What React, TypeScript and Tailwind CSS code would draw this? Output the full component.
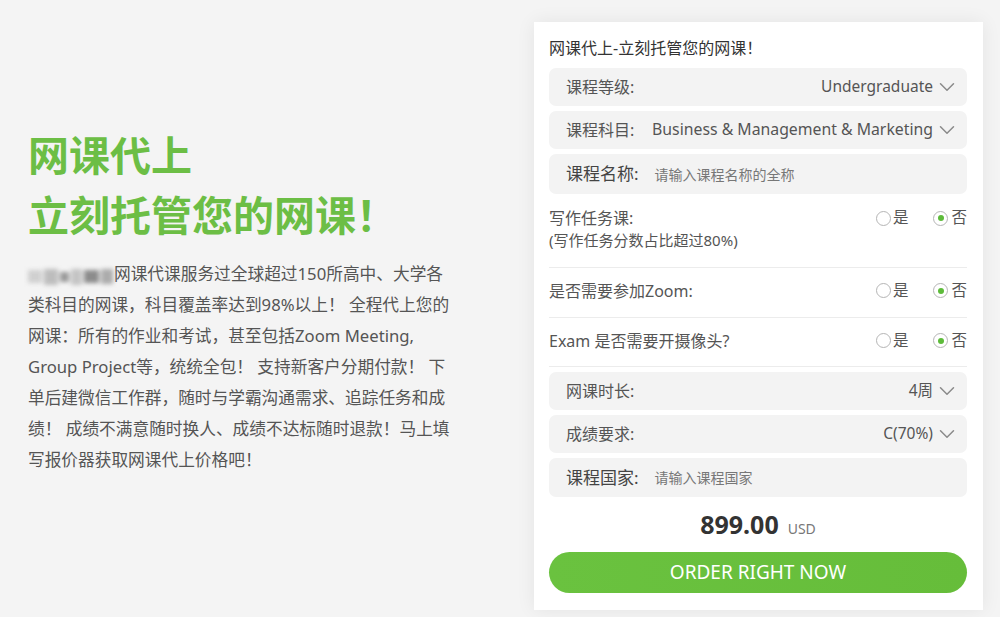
import React from 'react';

const font = "font-['Noto_Sans','Noto_Sans_CJK_SC',sans-serif]";

const Chevron = () => (
  <svg width="16" height="10" viewBox="0 0 16 10" fill="none" className="ml-[6px]">
    <path d="M1.5 1.8 8 8.2l6.5-6.4" stroke="#8a8a8a" strokeWidth="1.5" strokeLinecap="round" strokeLinejoin="round" />
  </svg>
);

const SelectBox = ({ label, value, h = 'h-[38px]' }: { label: string; value: string; h?: string }) => (
  <div className={`flex ${h} items-center rounded-[7px] bg-[#f3f3f3] pl-[17px] pr-[12px]`}>
    <span className="text-[16px] text-[#555]">{label}</span>
    <span className="ml-auto flex items-center text-[15.5px] text-[#555]">
      {value}
      <Chevron />
    </span>
  </div>
);

const InputBox = ({ label, placeholder, h = 'h-[40px]' }: { label: string; placeholder: string; h?: string }) => (
  <div className={`flex ${h} items-center rounded-[7px] bg-[#f3f3f3] pl-[17px] pr-[12px]`}>
    <span className="text-[17px] text-[#444]">{label}</span>
    <span className="ml-[16px] text-[14px] text-[#777]">{placeholder}</span>
  </div>
);

const Radios = () => (
  <div className="ml-auto flex items-center text-[15.5px] text-[#555]">
    <span className="flex items-center">
      <span className="h-[15px] w-[15px] rounded-full border border-[#b5b5b5] bg-white" />
      <span className="ml-[2px]">是</span>
    </span>
    <span className="ml-[25px] flex items-center">
      <span className="flex h-[15px] w-[15px] items-center justify-center rounded-full border border-[#b5b5b5] bg-white">
        <span className="h-[6px] w-[6px] rounded-full bg-[#5dbb3a]" />
      </span>
      <span className="ml-[3px]">否</span>
    </span>
  </div>
);

const Blurred = () => (
  <span className="mr-[1px] inline-flex h-[18px] w-[85px] translate-y-[3px] items-center gap-[2px] blur-[2px]">
    <span className="h-[13px] w-[14px] bg-[#d0d0d0]" />
    <span className="h-[16px] w-[14px] bg-[#bdbdbd]" />
    <span className="h-[10px] w-[9px] bg-[#9a9a9a]" />
    <span className="h-[16px] w-[12px] bg-[#c4c4c4]" />
    <span className="h-[13px] w-[15px] bg-[#8c8c8c]" />
    <span className="h-[15px] w-[12px] bg-[#acacac]" />
  </span>
);

export default function App() {
  const lines = [
    '类科目的网课，科目覆盖率达到98%以上！ 全程代上您的',
    '网课：所有的作业和考试，甚至包括Zoom Meeting,',
    'Group Project等，统统全包！ 支持新客户分期付款！ 下',
    '单后建微信工作群，随时与学霸沟通需求、追踪任务和成',
    '绩！ 成绩不满意随时换人、成绩不达标随时退款！马上填',
    '写报价器获取网课代上价格吧！',
  ];

  return (
    <div className={`flex h-[617px] w-full overflow-hidden bg-[#f4f4f4] ${font}`}>
      <section className="w-[534px] shrink-0 pl-[28px] pt-[125px]">
        <h1 className="text-[41px] font-bold leading-[60px] text-[#6cbe45]">
          网课代上
          <br />
          立刻托管您的网课！
        </h1>
        <div className="mt-[13px] text-[16.7px] leading-[31px] text-[#555]">
          <div className="whitespace-nowrap">
            <Blurred />
            网课代课服务过全球超过150所高中、大学各
          </div>
          {lines.map((l) => (
            <div key={l} className="whitespace-nowrap">
              {l}
            </div>
          ))}
        </div>
      </section>

      <section className="mt-[22px] flex h-[588px] w-[449px] shrink-0 flex-col bg-white pl-[15px] pr-[16px] pt-[14px] shadow-[0_0_18px_rgba(0,0,0,0.07)]">
        <h2 className="text-[16px] leading-[24px] text-[#333]">网课代上-立刻托管您的网课！</h2>

        <div className="mt-[8px] flex flex-col gap-[5px]">
          <SelectBox label="课程等级:" value="Undergraduate" />
          <div className="flex h-[38px] items-center rounded-[7px] bg-[#f3f3f3] pl-[17px] pr-[12px]">
            <span className="text-[16px] text-[#555]">课程科目:</span>
            <span className="ml-auto flex items-center text-[15.8px] text-[#555]">
              Business &amp; Management &amp; Marketing
              <Chevron />
            </span>
          </div>
          <InputBox label="课程名称:" placeholder="请输入课程名称的全称" />
        </div>

        <div className="flex border-b border-[#ececec] pb-[15px] pt-[13px]">
          <div>
            <div className="text-[16px] leading-[22px] text-[#555]">写作任务课:</div>
            <div className="text-[15px] leading-[23px] text-[#555]">(写作任务分数占比超过80%)</div>
          </div>
          <div className="ml-auto flex h-[22px] items-center">
            <Radios />
          </div>
        </div>

        <div className="flex h-[50px] items-center border-b border-[#ececec] pb-[4px]">
          <span className="text-[16px] text-[#555]">是否需要参加Zoom:</span>
          <Radios />
        </div>

        <div className="flex h-[49px] items-center border-b border-[#ececec] pb-[3px]">
          <span className="text-[16px] text-[#555]">Exam 是否需要开摄像头?</span>
          <Radios />
        </div>

        <div className="mt-[5px] flex flex-col gap-[5px]">
          <SelectBox label="网课时长:" value="4周" />
          <SelectBox label="成绩要求:" value="C(70%)" />
          <InputBox label="课程国家:" placeholder="请输入课程国家" h="h-[39px]" />
        </div>

        <div className="mt-[12px] flex items-baseline justify-center">
          <span className="text-[25px] font-bold leading-[30px] text-[#333]">899.00</span>
          <span className="ml-[9px] text-[14px] text-[#777]">USD</span>
        </div>

        <button className="mt-[13px] h-[41px] w-full rounded-full bg-gradient-to-r from-[#6ac23f] to-[#66bd3a] text-[19px] text-white">
          ORDER RIGHT NOW
        </button>
      </section>
    </div>
  );
}
